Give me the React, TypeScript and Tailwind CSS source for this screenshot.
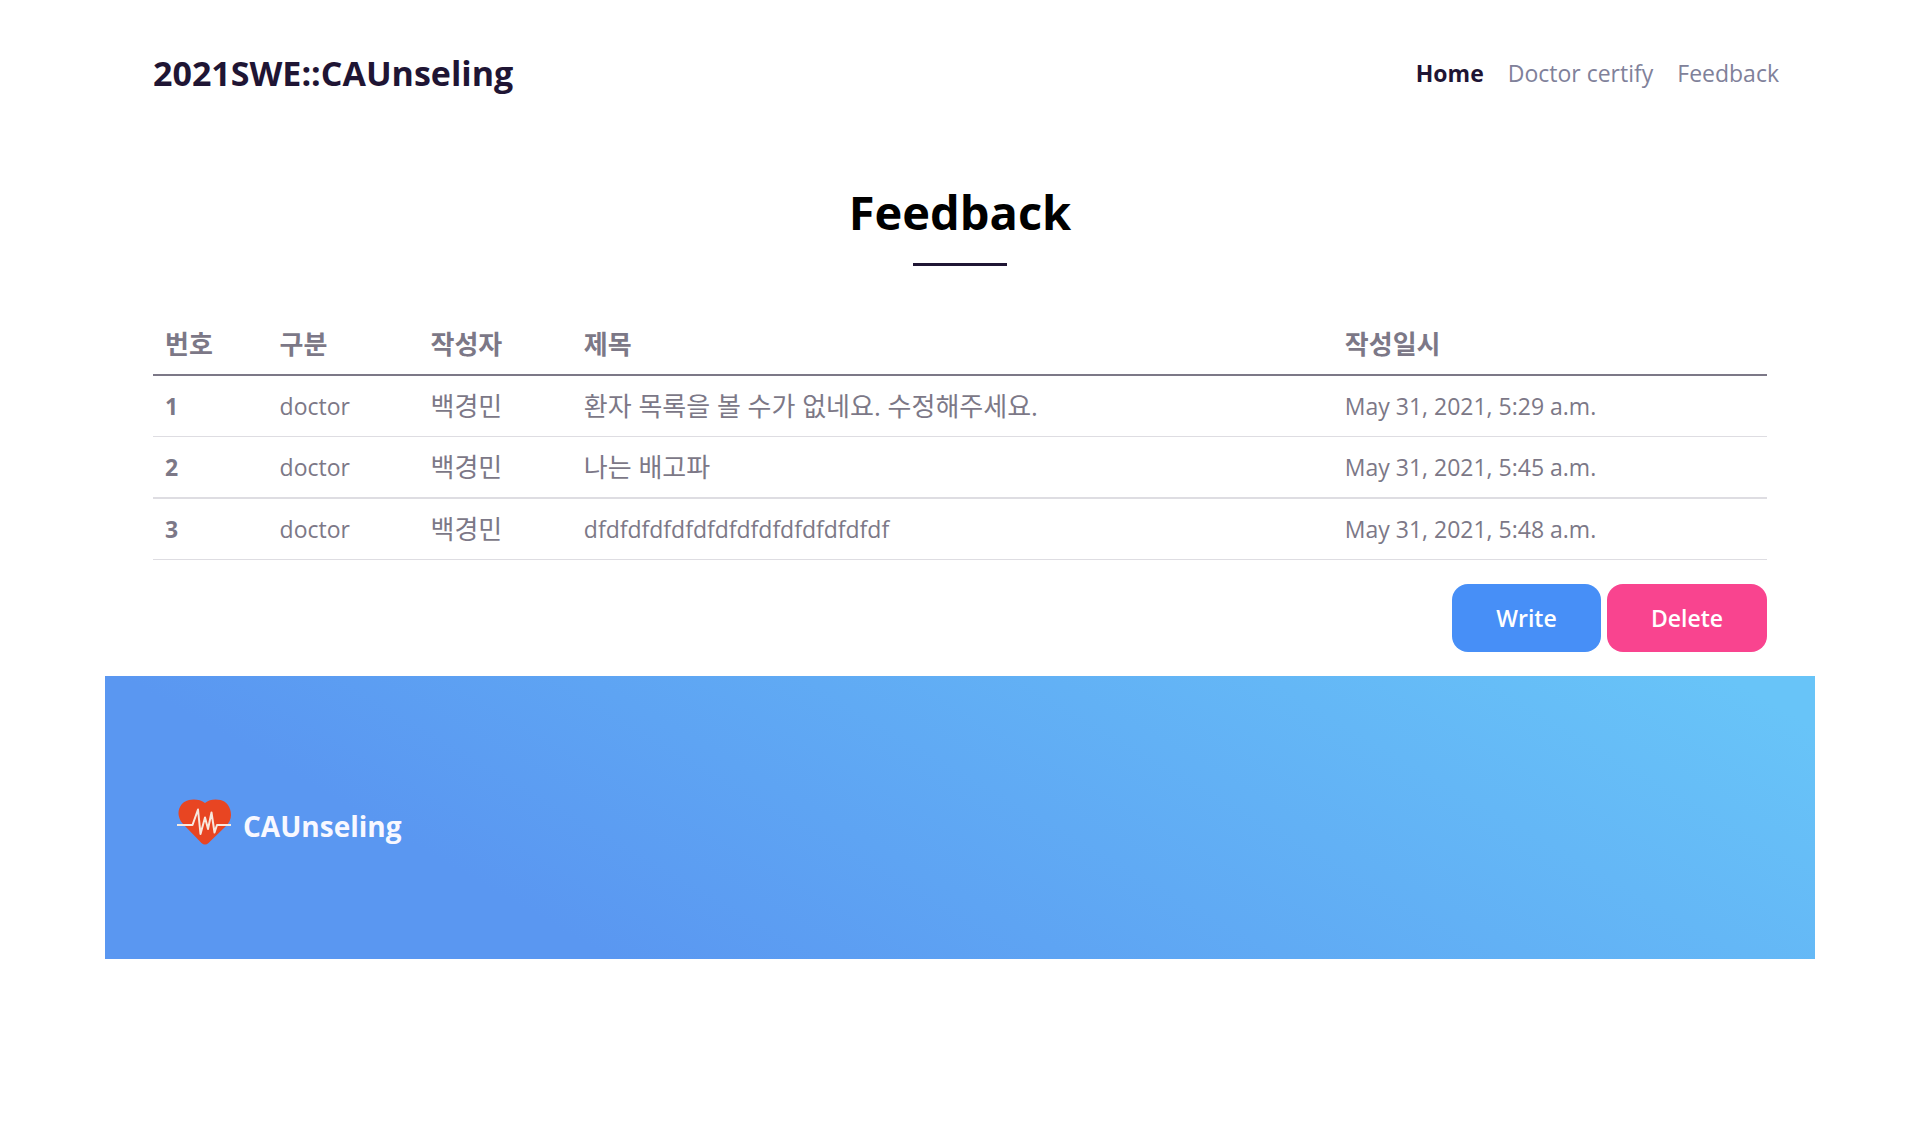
const rows = [
  { id: 1, kind: 'doctor', author: '백경민', title: '환자 목록을 볼 수가 없네요. 수정해주세요.', date: 'May 31, 2021, 5:29 a.m.', titleSize: 'text-[26px]', line: 'border-b' },
  { id: 2, kind: 'doctor', author: '백경민', title: '나는 배고파', date: 'May 31, 2021, 5:45 a.m.', titleSize: 'text-[26px]', line: 'border-b-2' },
  { id: 3, kind: 'doctor', author: '백경민', title: 'dfdfdfdfdfdfdfdfdfdfdfdfdfdf', date: 'May 31, 2021, 5:48 a.m.', titleSize: 'text-[23px]', line: 'border-b' },
];

function HeartLogo() {
  return (
    <svg viewBox="0 0 54 48" className="h-12 w-[54px]" aria-hidden="true">
      <path
        d="M28 5C24 1.500 17 .8 12 2C4 4 .5 11 1.800 18C2.500 21.500 4.500 24.500 7 27L24.500 45Q28 48 31.500 45L49 28C52 25 54 21 54 17C54 9 49.500 3.500 43.500 2C38 .8 32 1.500 28 5Z"
        fill="#e84522"
      />
      <path
        d="M0 27H15.500L21 11.500L23.500 36L28 19.500L31 31L34.500 14.500L37.500 34.500L40 27H54"
        fill="none"
        stroke="#f7e9df"
        strokeWidth="2"
        strokeLinejoin="round"
      />
    </svg>
  );
}

export default function App() {
  return (
    <div className="min-h-screen bg-white font-['Open_Sans','Noto_Sans_CJK_KR',sans-serif] text-[23px] leading-9 text-[#7c7887]">
      <div className="mx-auto max-w-[1710px]">
        <header className="flex items-center justify-between pt-[46px] pr-9 pl-12">
          <a href="#" className="text-[34px] leading-[54px] font-bold text-[#1f1534]">2021SWE::CAUnseling</a>
          <nav className="flex gap-6 text-[#80819a]">
            <a href="#" className="font-bold text-[#1f1534]">Home</a>
            <a href="#">Doctor certify</a>
            <a href="#">Feedback</a>
          </nav>
        </header>

        <main className="px-12">
          <h1 className="pt-20 text-center text-[47px] leading-[64px] font-bold text-black">Feedback</h1>
          <div className="mx-auto mt-[19px] h-[3px] w-[94px] bg-[#1f1534]" />

          <table className="mt-12 w-full table-fixed border-collapse text-left">
            <colgroup>
              <col className="w-[7.1%]" />
              <col className="w-[9.35%]" />
              <col className="w-[9.5%]" />
              <col className="w-[47.15%]" />
              <col />
            </colgroup>
            <thead>
              <tr className="border-b-2 border-[#7c7887]">
                {['번호', '구분', '작성자', '제목', '작성일시'].map((h) => (
                  <th key={h} scope="col" className="px-3 py-3 text-[26px] leading-9 font-bold">{h}</th>
                ))}
              </tr>
            </thead>
            <tbody>
              {rows.map((r) => (
                <tr key={r.id} className={`border-[#dedde2] ${r.line}`}>
                  <th scope="row" className="px-3 py-3 font-bold">{r.id}</th>
                  <td className="px-3 py-3">{r.kind}</td>
                  <td className="px-3 py-3 text-[26px] leading-9">{r.author}</td>
                  <td className={`px-3 py-3 leading-9 ${r.titleSize}`}>{r.title}</td>
                  <td className="px-3 py-3">{r.date}</td>
                </tr>
              ))}
            </tbody>
          </table>

          <div className="flex justify-end gap-1.5 py-6 font-semibold text-white">
            <button type="button" className="h-[68px] w-[149px] rounded-2xl bg-[#478ff7]">Write</button>
            <button type="button" className="h-[68px] w-40 rounded-2xl bg-[#f9448f]">Delete</button>
          </div>
        </main>

        <footer className="flex h-[283px] items-center bg-[linear-gradient(30deg,#5a97f1_23%,#68c4f8_96%)] px-[72px] pt-2">
          <a href="#" className="flex items-center gap-3 text-[28px] font-bold text-[#f8f8ff]">
            <HeartLogo />
            <span className="pt-2">CAUnseling</span>
          </a>
        </footer>
      </div>
    </div>
  );
}
